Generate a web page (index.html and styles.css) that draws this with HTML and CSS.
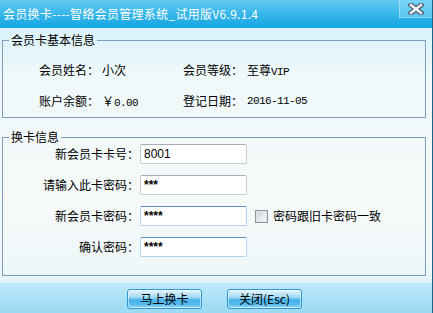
FILE: index.html
```html
<!DOCTYPE html>
<html lang="zh-CN">
<head>
    <meta charset="UTF-8">
    <title>会员换卡</title>
    <link rel="stylesheet" href="styles.css">
</head>
<body>
    <div class="window">
        <div class="titlebar">
            <span class="title">会员换卡----智络会员管理系统_试用版V6.9.1.4</span>
            <span class="close">
                <svg width="16" height="12" viewBox="0 0 16 12">
                    <path d="M3 2 L13 10 M13 2 L3 10" stroke="#4a5a66" stroke-width="5" stroke-linecap="square"/>
                    <path d="M3 2 L13 10 M13 2 L3 10" stroke="#eef2f4" stroke-width="2.6" stroke-linecap="square"/>
                </svg>
            </span>
        </div>
        <div class="main">
            <fieldset class="group basic">
                <legend>会员卡基本信息</legend>
                <div class="info-grid">
                    <span>会员姓名：</span><span>小次</span>
                    <span>会员等级：</span><span>至尊<span class="num">VIP</span></span>
                    <span>账户余额：</span><span>￥<span class="num">0.00</span></span>
                    <span>登记日期：</span><span class="num">2016-11-05</span>
                </div>
            </fieldset>
            <fieldset class="group change">
                <legend>换卡信息</legend>
                <div class="form-grid">
                    <label>新会员卡卡号：</label>
                    <div class="field">8001</div>
                    <span></span>
                    <label>请输入此卡密码：</label>
                    <div class="field pwd">***</div>
                    <span></span>
                    <label>新会员卡密码：</label>
                    <div class="field pwd blue">****</div>
                    <div class="check"><span class="box"></span>密码跟旧卡密码一致</div>
                    <label>确认密码：</label>
                    <div class="field pwd blue">****</div>
                    <span></span>
                </div>
            </fieldset>
        </div>
        <div class="footer">
            <button type="button" class="btn">马上换卡</button>
            <button type="button" class="btn">关闭(Esc)</button>
        </div>
    </div>
</body>
</html>
```

FILE: styles.css
```css
body {
    margin: 0;
    padding: 0;
    font-family: "Noto Sans CJK SC", "Liberation Sans", sans-serif;
    font-size: 12px;
    color: #000;
    background: #fff;
}
.window {
    width: 432px;
    height: 313px;
    border-right: 1px solid #1b6586;
    display: flex;
    flex-direction: column;
    overflow: hidden;
}
.titlebar {
    height: 28px;
    flex: none;
    display: flex;
    justify-content: space-between;
    align-items: flex-start;
    background: linear-gradient(#66cbf2, #3bb7ea 45%, #12a6e3);
}
.title {
    color: #fff;
    line-height: 28px;
    padding-left: 3px;
    letter-spacing: 0.3px;
}
.close {
    width: 32px;
    height: 17px;
    margin-left: auto;
    display: flex;
    justify-content: center;
    align-items: center;
    background: linear-gradient(#7ad3f5, #5cc6f1);
    border-left: 1px solid #9ddcf6;
    border-bottom: 1px solid #8fd5f3;
}
.main {
    flex: 1;
    padding: 5px 6px 0 2px;
    background: linear-gradient(#d9f2fb, #eff8fa 18%, #f6f9f9 70%, #eef7f9 96%, #e2f3f9);
}
.group {
    margin: 0;
    padding: 0;
    border: 1px solid #7b9ebf;
}
.group legend {
    margin-left: 6px;
    padding: 0 2px;
    line-height: 14px;
}
.basic {
    padding: 13px 0 6px 0;
}
.info-grid {
    display: grid;
    grid-template-columns: 63px 81px 64px auto;
    grid-auto-rows: 20px;
    row-gap: 11px;
    line-height: 20px;
    padding-left: 36px;
}
.num {
    font-family: "Liberation Mono", monospace;
    font-size: 11px;
    letter-spacing: -0.6px;
}
.change {
    margin-top: 12px;
    padding: 0 0 18px 0;
}
.form-grid {
    display: grid;
    grid-template-columns: 137px 107px auto;
    grid-auto-rows: 20px;
    row-gap: 11px;
    column-gap: 0;
    align-items: center;
}
.form-grid label {
    text-align: right;
    line-height: 20px;
    padding-right: 1px;
}
.field {
    height: 20px;
    box-sizing: border-box;
    border: 1px solid #c8cdd2;
    border-top-color: #a9afb6;
    border-radius: 2px;
    background: #fff;
    padding-left: 3px;
    font-family: "Liberation Sans", sans-serif;
    font-size: 12px;
    line-height: 18px;
}
.field.blue {
    border-color: #b4d3ee;
    border-top-color: #5b8fc4;
}
.pwd {
    font-weight: bold;
}
.check {
    display: flex;
    align-items: center;
    margin-left: 8px;
    line-height: 20px;
}
.check .box {
    width: 11px;
    height: 11px;
    border: 1px solid #8d959c;
    background: linear-gradient(135deg, #c9cdd0, #eef0f1 70%, #f8f9f9);
    box-shadow: inset 0 0 0 1px #e4e6e8;
    margin-right: 5px;
}
.footer {
    height: 30px;
    flex: none;
    display: flex;
    gap: 25px;
    padding: 6px 0 0 127px;
    box-sizing: border-box;
    background: linear-gradient(#c0eafa, #a8e0f6 60%, #9bd9f4);
}
.btn {
    width: 75px;
    height: 20px;
    padding: 0;
    border: 1px solid #2f97d6;
    border-radius: 3px;
    font-family: "Noto Sans CJK SC", sans-serif;
    font-size: 12px;
    line-height: 18px;
    color: #000;
    cursor: pointer;
    background: linear-gradient(#e4f5fd, #a4dbf5 40%, #47b3eb 55%, #55bbee 80%, #9fdcf5);
    box-shadow: inset 0 0 0 1px rgba(255, 255, 255, 0.5);
}
.btn:hover {
    background: linear-gradient(#f0fafe, #b8e4f8 40%, #5cc0ef 55%, #6cc6f0 80%, #b0e4f8);
}
```
